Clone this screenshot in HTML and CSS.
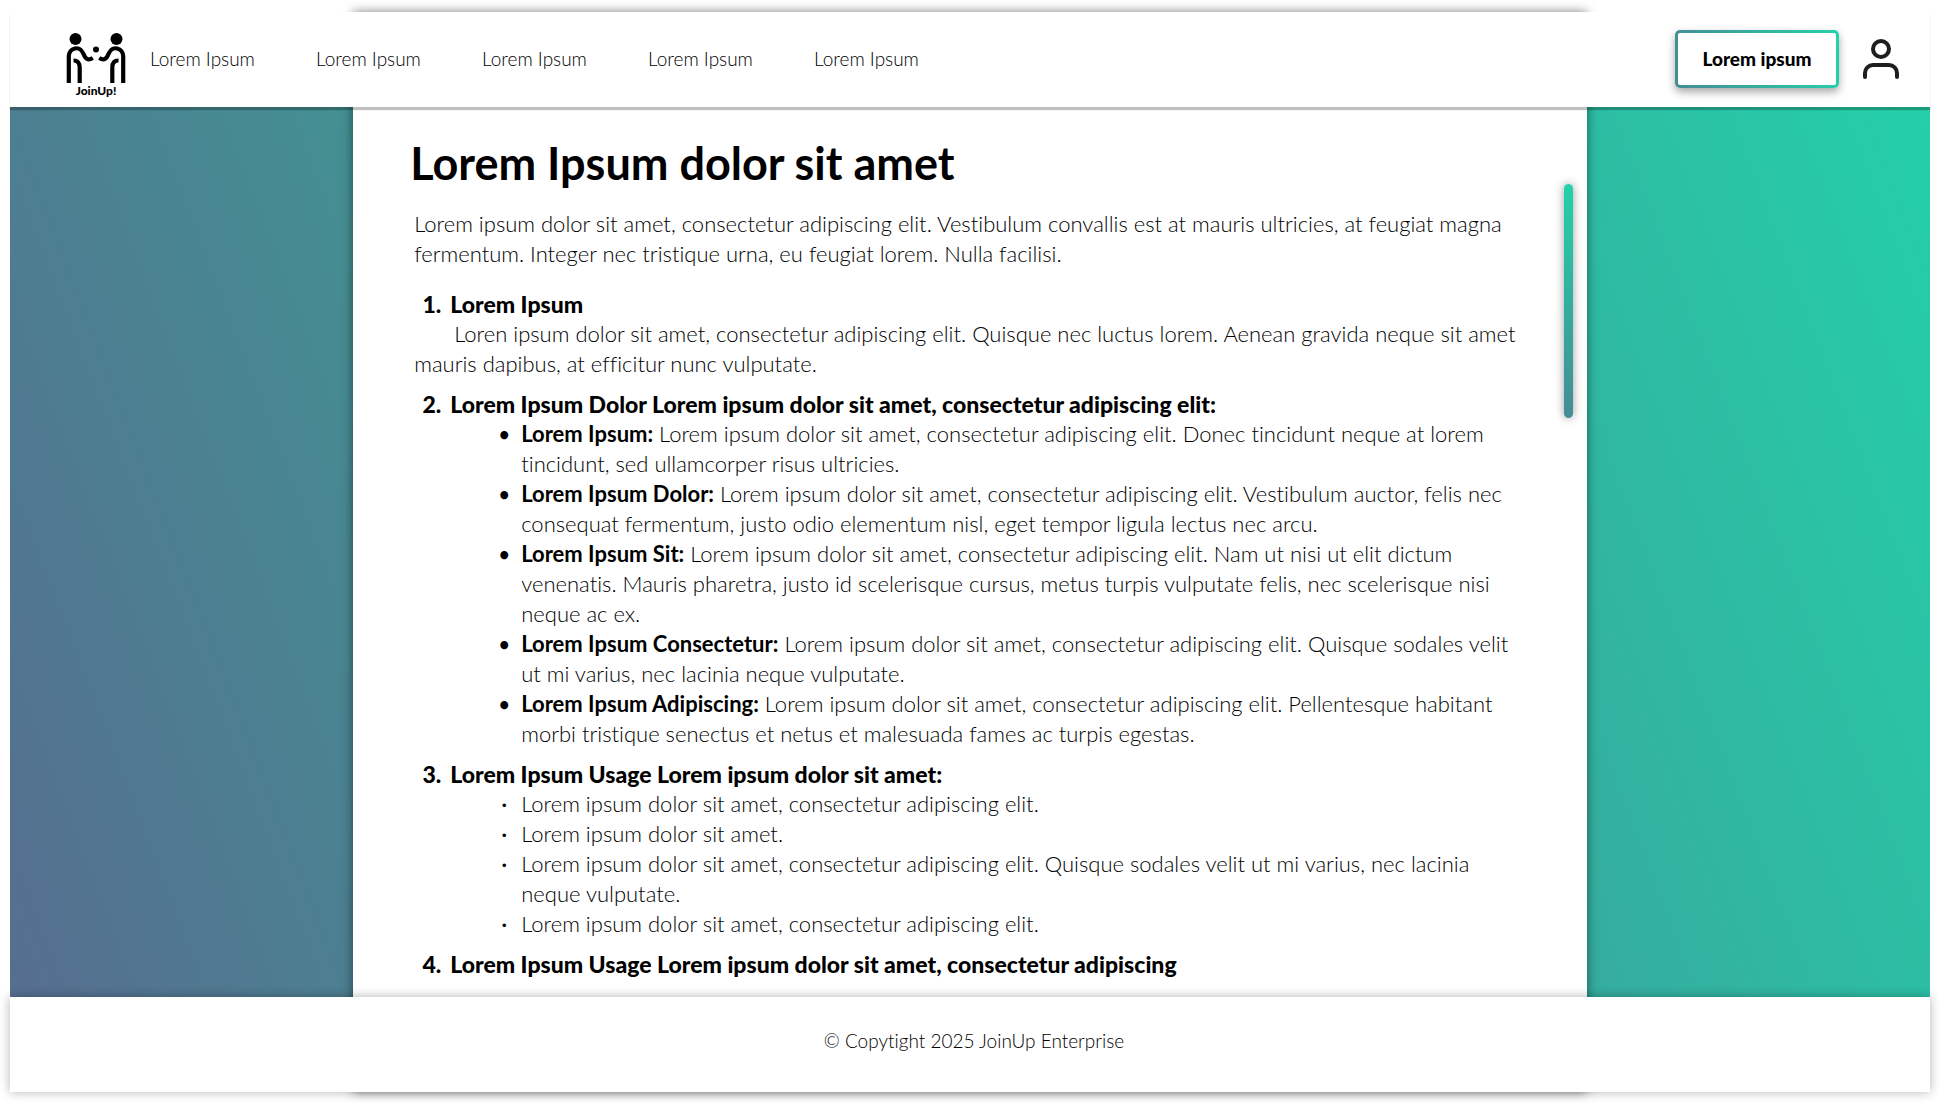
FILE: index.html
```html
<!DOCTYPE html>
<html lang="en">
<head>
<meta charset="utf-8">
<meta name="viewport" content="width=device-width, initial-scale=1">
<title>JoinUp!</title>
<link rel="stylesheet" href="styles.css">
</head>
<body>
<div class="page">
  <header class="header">
    <a class="logo" href="#" aria-label="JoinUp! home">
      <svg class="logo-mark" viewBox="0 0 60 50" aria-hidden="true">
        <g fill="none" stroke="#000" stroke-width="4.2">
          <path d="M2.800 50V23.500c0-9 11-11.500 14.500-3 2.200 5.500 4.500 7.500 9.500 4.500"/>
          <path d="M7.500 27.500c4.500 0 6.200 3 6.200 7V50"/>
          <path d="M57.200 50V23.500c0-9-11-11.500-14.500-3-2.200 5.500-4.500 7.500-9.500 4.500"/>
          <path d="M52.500 27.500c-4.500 0-6.200 3-6.200 7V50"/>
        </g>
        <circle cx="9.500" cy="6" r="6"/>
        <circle cx="50.500" cy="6" r="6"/>
        <circle cx="30" cy="16.500" r="3"/>
      </svg>
      <span class="logo-name">JoinUp!</span>
    </a>
    <nav class="nav">
      <a href="#">Lorem Ipsum</a>
      <a href="#">Lorem Ipsum</a>
      <a href="#">Lorem Ipsum</a>
      <a href="#">Lorem Ipsum</a>
      <a href="#">Lorem Ipsum</a>
    </nav>
    <button class="cta" type="button">Lorem ipsum</button>
    <a class="account" href="#" aria-label="Account">
      <svg viewBox="0 0 36 40" width="36" height="40" fill="none" stroke="#1e1e1e" stroke-width="4" stroke-linecap="round" aria-hidden="true">
        <circle cx="18" cy="10" r="8"/>
        <path d="M2 38v-4a8 8 0 0 1 8-8h16a8 8 0 0 1 8 8v4"/>
      </svg>
    </a>
  </header>

  <main class="panel">
    <div class="scroll-thumb"></div>
    <h1>Lorem Ipsum dolor sit amet</h1>
    <p class="intro">Lorem ipsum dolor sit amet, consectetur adipiscing elit. Vestibulum convallis est at mauris ultricies, at feugiat magna<br>fermentum. Integer nec tristique urna, eu feugiat lorem. Nulla facilisi.</p>
    <ol class="sections">
      <li>
        <h2>Lorem Ipsum</h2>
        <p class="indented">Loren ipsum dolor sit amet, consectetur adipiscing elit. Quisque nec luctus lorem. Aenean gravida neque sit amet<br>mauris dapibus, at efficitur nunc vulputate.</p>
      </li>
      <li>
        <h2>Lorem Ipsum Dolor Lorem ipsum dolor sit amet, consectetur adipiscing elit:</h2>
        <ul class="terms">
          <li><b>Lorem Ipsum:</b> Lorem ipsum dolor sit amet, consectetur adipiscing elit. Donec tincidunt neque at lorem<br>tincidunt, sed ullamcorper risus ultricies.</li>
          <li><b>Lorem Ipsum Dolor:</b> Lorem ipsum dolor sit amet, consectetur adipiscing elit. Vestibulum auctor, felis nec<br>consequat fermentum, justo odio elementum nisl, eget tempor ligula lectus nec arcu.</li>
          <li><b>Lorem Ipsum Sit:</b> Lorem ipsum dolor sit amet, consectetur adipiscing elit. Nam ut nisi ut elit dictum<br>venenatis. Mauris pharetra, justo id scelerisque cursus, metus turpis vulputate felis, nec scelerisque nisi<br>neque ac ex.</li>
          <li><b>Lorem Ipsum Consectetur:</b> Lorem ipsum dolor sit amet, consectetur adipiscing elit. Quisque sodales velit<br>ut mi varius, nec lacinia neque vulputate.</li>
          <li><b>Lorem Ipsum Adipiscing:</b> Lorem ipsum dolor sit amet, consectetur adipiscing elit. Pellentesque habitant<br>morbi tristique senectus et netus et malesuada fames ac turpis egestas.</li>
        </ul>
      </li>
      <li>
        <h2>Lorem Ipsum Usage Lorem ipsum dolor sit amet:</h2>
        <ul class="notes">
          <li>Lorem ipsum dolor sit amet, consectetur adipiscing elit.</li>
          <li>Lorem ipsum dolor sit amet.</li>
          <li>Lorem ipsum dolor sit amet, consectetur adipiscing elit. Quisque sodales velit ut mi varius, nec lacinia<br>neque vulputate.</li>
          <li>Lorem ipsum dolor sit amet, consectetur adipiscing elit.</li>
        </ul>
      </li>
      <li>
        <h2>Lorem Ipsum Usage Lorem ipsum dolor sit amet, consectetur adipiscing</h2>
      </li>
    </ol>
  </main>

  <footer class="footer">© Copytight 2025 JoinUp Enterprise</footer>
</div>
</body>
</html>
```

FILE: styles.css
```css
* {
  box-sizing: border-box;
}

body {
  margin: 0;
  padding: 12px 10px;
  background: #fff;
  color: #000;
  font-family: Lato, "Open Sans", sans-serif;
  font-size: 22px;
  font-weight: 300;
  font-variant-ligatures: none;
  line-height: 30px;
}

h1, h2, p, ol, ul {
  margin: 0;
  padding: 0;
}

a {
  color: inherit;
  text-decoration: none;
}

.page {
  display: grid;
  grid-template-columns: 1fr;
  grid-template-rows: 95px 1fr 95px;
  min-height: calc(100vh - 24px);
  background: linear-gradient(69deg, #576c90 0%, #439092 31%, #35ad9f 70%, #23d1a9 100%);
}

/* Header */
.header {
  grid-area: 1 / 1;
  z-index: 1;
  display: flex;
  align-items: center;
  padding: 0 31px 2px 56px;
  background: #fff;
  box-shadow: 0 3px 1px rgba(0, 0, 0, 0.25);
}

.logo {
  display: flex;
  flex-direction: column;
  align-items: center;
  width: 60px;
  margin: 14px 24px 0 0;
}

.logo-mark {
  width: 60px;
  height: 50px;
}

.logo-name {
  font-size: 12px;
  font-weight: 900;
  line-height: 16px;
}

.nav {
  display: flex;
  flex: 1;
  gap: 64px;
  font-size: 19px;
}

.nav a {
  width: 102px;
  white-space: nowrap;
}

.cta {
  width: 164px;
  height: 58px;
  border: 3px solid transparent;
  border-radius: 5px;
  background:
    linear-gradient(#fff, #fff) padding-box,
    linear-gradient(80deg, #458c95, #25d1a9) border-box;
  box-shadow: 0 4px 8px rgba(0, 0, 0, 0.35);
  color: #000;
  font: 900 19px/30px Lato, "Open Sans", sans-serif;
}

.account {
  display: flex;
  margin-left: 24px;
}

/* Document panel, running behind the header and the footer */
.panel {
  grid-area: 1 / 1 / 4 / 2;
  justify-self: center;
  position: relative;
  width: 64.25%;
  padding: 122px 40px 105px 61px;
  background: #fff;
  box-shadow: 0 0 10px rgba(0, 0, 0, 0.5);
}

.panel h1 {
  margin: 0 0 17px -4px;
  font-size: 45px;
  font-weight: 700;
  line-height: 58px;
}

.intro {
  margin-bottom: 20px;
}

.sections {
  display: flex;
  flex-direction: column;
  gap: 10px;
  list-style: none;
  counter-reset: section;
}

.sections h2 {
  font-size: 23px;
  font-weight: 900;
  line-height: 30px;
}

.sections h2::before {
  counter-increment: section;
  content: counter(section) ".";
  display: inline-block;
  width: 27px;
  margin-right: 9px;
  text-align: right;
}

.indented {
  text-indent: 40px;
}

.terms,
.notes {
  padding-left: 107px;
  list-style: none;
}

.terms li::before,
.notes li::before {
  content: "•";
  display: inline-block;
  width: 12px;
  margin: 0 11px 0 -23px;
  font-size: 18px;
  font-weight: 700;
  line-height: 20px;
  text-align: center;
  vertical-align: 1px;
}

.notes li::before {
  font-size: 12px;
  font-weight: 300;
  vertical-align: 3px;
}

.terms b {
  font-weight: 700;
}

.scroll-thumb {
  position: absolute;
  top: 172px;
  right: 14px;
  width: 9px;
  height: 234px;
  border-radius: 5px;
  background: linear-gradient(#23d1a9, #458c95);
  box-shadow: 0 0 10px rgba(0, 0, 0, 0.4);
}

/* Footer */
.footer {
  grid-area: 3 / 1;
  z-index: 1;
  display: flex;
  align-items: center;
  justify-content: center;
  padding: 0 0 8px 8px;
  background: #fff;
  box-shadow: 0 0 10px rgba(0, 0, 0, 0.3);
  font-size: 19px;
}
```
